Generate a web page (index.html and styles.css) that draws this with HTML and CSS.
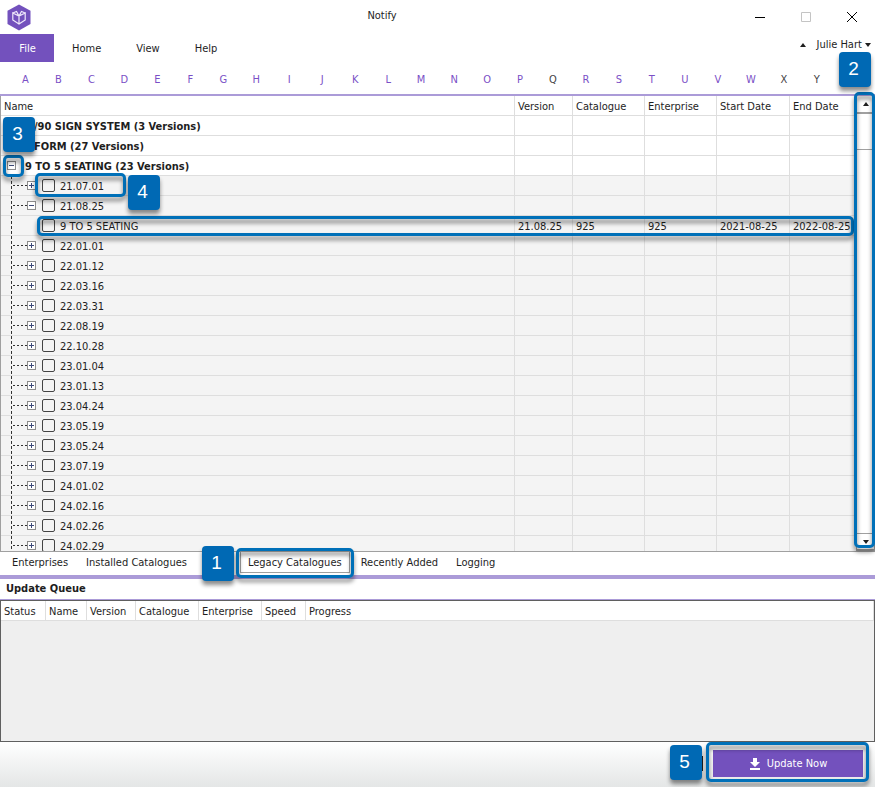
FILE: index.html
```html
<!doctype html>
<html lang="en">
  <head>
    <meta charset="utf-8">
    <meta name="viewport" content="width=device-width">
    <title>Notify</title>

    <link rel="stylesheet" href="styles.css">
  </head>
  <body>
    <header id="titlebar">
      <svg class="logo" width="24" height="27" viewBox="0 0 24 27">
        <path fill="#7351bd" d="M12 0.500 23.500 6.800V20L12 26.500 0.500 20V6.800z"/>
        <path fill="none" stroke="#efe8fb" stroke-width="1.200" d="M12 12v8M5.800 9v7L12 20l6.200-4V9L12 12zM5.800 9 9.500 7.500 12 12l2.500-4.500L18.200 9"/>
      </svg>
      <h1>Notify</h1>
      <button class="win" aria-label="Minimize"><svg width="12" height="12"><path d="M1 6.500h10" stroke="#000"/></svg></button>
      <button class="win" aria-label="Maximize"><svg width="12" height="12"><path d="M1.500 1.500h9v9h-9z" fill="none" stroke="#c4c4c4"/></svg></button>
      <button class="win" aria-label="Close"><svg width="12" height="12"><path d="M1 1l10 10M11 1 1 11" stroke="#000"/></svg></button>
    </header>

    <nav id="menu">
      <button class="file">File</button>
      <button>Home</button>
      <button>View</button>
      <button>Help</button>
      <div class="user">
        <button aria-label="Collapse"><i class="up"></i></button>
        <button>Julie Hart <i class="down"></i></button>
      </div>
    </nav>

    <nav id="letters">
      <button>A</button><button>B</button><button>C</button><button>D</button>
      <button>E</button><button>F</button><button>G</button><button>H</button>
      <button>I</button><button>J</button><button>K</button><button>L</button>
      <button>M</button><button>N</button><button>O</button><button>P</button>
      <button class="none">Q</button><button>R</button><button>S</button><button>T</button>
      <button>U</button><button>V</button><button>W</button><button class="none">X</button>
      <button class="none">Y</button><button class="none"></button>
      <span class="badge b2">2</span>
    </nav>

    <main>
      <div id="tree">
        <table>
          <colgroup>
            <col><col class="c-version"><col class="c-code"><col class="c-code"><col class="c-start"><col class="c-end">
          </colgroup>
          <thead>
            <tr><th>Name</th><th>Version</th><th>Catalogue</th><th>Enterprise</th><th>Start Date</th><th>End Date</th></tr>
          </thead>
          <tbody id="rows">
            <tr class="group"><td><div class="cell covered"><span>/90 SIGN SYSTEM (3 Versions)</span></div><span class="badge b3">3</span></td><td></td><td></td><td></td><td></td><td></td></tr>
            <tr class="group"><td><div class="cell covered"><span>FORM (27 Versions)</span></div></td><td></td><td></td><td></td><td></td><td></td></tr>
            <tr class="group"><td><div class="cell"><button class="exp" aria-label="Collapse"></button><span>9 TO 5 SEATING (23 Versions)</span></div><span class="ring r3"></span></td><td></td><td></td><td></td><td></td><td></td></tr>
          </tbody>
        </table>
      </div>
      <div id="scroll">
        <button aria-label="Scroll up"><i class="up"></i></button>
        <div class="thumb"></div>
        <button class="last" aria-label="Scroll down"><i class="down"></i></button>
      </div>
      <span class="ring r2"></span>
    </main>

    <nav id="tabs">
      <button>Enterprises</button>
      <button>Installed Catalogues</button>
      <span class="badge b1">1</span>
      <button class="active">Legacy Catalogues<span class="ring r1"></span></button>
      <button>Recently Added</button>
      <button>Logging</button>
    </nav>

    <section id="queue">
      <h2>Update Queue</h2>
      <div class="list">
        <table>
          <colgroup>
            <col class="q-status"><col class="q-name"><col class="q-version"><col class="q-code"><col class="q-code"><col class="q-speed"><col>
          </colgroup>
          <thead>
            <tr><th>Status</th><th>Name</th><th>Version</th><th>Catalogue</th><th>Enterprise</th><th>Speed</th><th>Progress</th></tr>
          </thead>
        </table>
      </div>
    </section>

    <footer>
      <span class="badge b5">5</span>
      <div class="caret"></div>
      <button id="update">
        <svg width="12" height="12" viewBox="0 0 12 12"><path fill="#fff" d="M4 0h4v4h3L6 9 1 4h3zM1 10h10v2H1z"/></svg>
        Update Now
        <span class="ring r5"></span>
      </button>
    </footer>

    <script>
      var versions = ["21.07.01", "21.08.25", "22.01.01", "22.01.12", "22.03.16",
            "22.03.31", "22.08.19", "22.10.28", "23.01.04", "23.01.13", "23.04.24",
            "23.05.19", "23.05.24", "23.07.19", "24.01.02", "24.02.16", "24.02.26", "24.02.29"],
          rows = document.getElementById("rows"),
          open = "21.08.25";

      function addRow(cls, id, name, cells, extra) {
        var tr = document.createElement("tr"),
            html = '<td><div class="cell">';

        tr.className = cls;
        if (cls === "version") {
          html += '<button class="exp' + (name === open ? "" : " plus") + '" aria-label="Expand"></button>';
        }
        html += '<input type="checkbox" id="' + id + '"><label for="' + id + '">' + name + "</label></div>" + extra + "</td>";
        for (var i = 0; i < 5; i++) {
          html += "<td>" + (cells[i] || "") + "</td>";
        }
        tr.innerHTML = html;
        rows.appendChild(tr);
      }

      for (var i = 0; i < versions.length; i++) {
        addRow("version", "v" + i, versions[i], [],
          i === 0 ? '<span class="ring r4"></span><span class="badge b4">4</span>' : "");
        if (versions[i] === open) {
          addRow("item", "item", "9 TO 5 SEATING",
            ["21.08.25", "925", "925", "2021-08-25", "2022-08-25"], '<span class="ring row"></span>');
        }
      }
    </script>
  </body>
</html>
```

FILE: styles.css
```css
* { box-sizing: border-box; }

body {
  display: flex;
  flex-direction: column;
  height: 100vh;
  margin: 0;
  overflow: hidden;
  background: #fff;
  color: #1e1e1e;
  font: 11px/14px "DejaVu Sans Condensed", "DejaVu Sans", sans-serif;
}

button {
  padding: 0;
  border: 0;
  background: none;
  color: inherit;
  font: inherit;
  cursor: pointer;
}

h1, h2 {
  margin: 0;
  font-size: 11px;
}

/* title bar */
#titlebar {
  display: flex;
  align-items: center;
  height: 34px;
  flex: none;
}

.logo { margin-left: 7px; }

#titlebar h1 {
  flex: 1;
  padding: 0 4px 2px 0;
  font-weight: normal;
  text-align: center;
}

.win {
  width: 46px;
  height: 34px;
}

.win svg { display: block; margin: 0 auto; }

/* menu */
#menu {
  display: flex;
  flex: none;
  height: 28px;
}

#menu > button { padding: 2px 17px 0 18px; }

#menu .file {
  width: 54px;
  background: #7351bd;
  color: #fff;
}

.user {
  display: flex;
  gap: 10px;
  margin-left: auto;
  padding: 0 4px 6px 0;
}

.up, .down {
  display: inline-block;
  border: 3px solid transparent;
  vertical-align: middle;
}

.up { border-top: 0; border-bottom: 4px solid #1e1e1e; }
.down { border-bottom: 0; border-top: 4px solid #1e1e1e; }

#letters {
  position: relative;
  display: flex;
  flex: none;
  height: 34px;
  padding: 0 9px;
  border-bottom: 2px solid #ab9bd8;
}

#letters button {
  flex: 1;
  padding-top: 4px;
  color: #7a4fc6;
}

#letters .none { color: #444; }

/* catalogue tree */
main {
  position: relative;
  display: flex;
  flex: 1;
  min-height: 0;
  border: 1px solid #a0a0a0;
  border-top: 0;
}

#tree {
  flex: 1;
  overflow: hidden;
}

table {
  width: 100%;
  table-layout: fixed;
  border-collapse: separate;
  border-spacing: 0;
}

th, td {
  height: 20px;
  padding: 2px 3px 0;
  border-right: 1px solid #dedede;
  border-bottom: 1px solid #dedede;
  font-weight: normal;
  text-align: left;
  white-space: nowrap;
}

#tree th:last-child, #tree td:last-child { border-right: 0; }

.c-version { width: 58px; }
.c-code { width: 72px; }
.c-start { width: 73px; }
.c-end { width: 66px; }

#rows tr { position: relative; }

.group td { font-weight: bold; }
.version td, .item td { background: #f4f4f4; }
#rows td:first-child { padding: 0; }

.cell {
  position: relative;
  display: flex;
  align-items: center;
  gap: 6px;
  height: 19px;
}

.cell span, .cell label { padding-top: 2px; }

.group .cell { gap: 9px; padding-left: 6px; }
.group .covered { padding-left: 33px; }
.version .cell { padding-left: 26px; }
.item .cell { padding-left: 41px; }

/* dashed connectors */
.version .cell::before, .item .cell::before {
  content: "";
  position: absolute;
  top: 0;
  left: 10px;
  width: 1px;
  height: 20px;
  background: repeating-linear-gradient(#333 0 3px, transparent 3px 5px);
}

.version .cell::after {
  content: "";
  position: absolute;
  top: 9px;
  left: 12px;
  width: 14px;
  height: 1px;
  background: repeating-linear-gradient(90deg, #333 0 2px, transparent 2px 4px);
}

.exp {
  width: 9px;
  height: 9px;
  border: 1px solid #8c8c8c;
  background: linear-gradient(#3c4a78, #3c4a78) center / 5px 1px no-repeat, #fff;
}

.exp.plus {
  background: linear-gradient(#3c4a78, #3c4a78) center / 5px 1px no-repeat,
    linear-gradient(#3c4a78, #3c4a78) center / 1px 5px no-repeat, #fff;
}

input {
  appearance: none;
  width: 13px;
  height: 13px;
  margin: 0;
  border: 1px solid #444;
  border-radius: 2px;
}

.cell label { margin-left: -1px; }

#scroll {
  display: flex;
  flex-direction: column;
  width: 18px;
  border-left: 1px solid #a0a0a0;
}

#scroll button {
  height: 18px;
  border-bottom: 2px solid #a0a0a0;
  line-height: 10px;
}

#scroll .last {
  margin-top: auto;
  border-top: 1px solid #a0a0a0;
}

.thumb {
  height: 36px;
  border-bottom: 1px solid #a0a0a0;
}

/* tabs */
#tabs {
  position: relative;
  display: flex;
  flex: none;
  height: 27px;
  padding-left: 5px;
  border-bottom: 4px solid #ab9bd8;
}

#tabs button {
  position: relative;
  height: 21px;
  padding: 0 7px;
  margin-right: 4px;
}

#tabs .active {
  margin-left: 42px;
  padding: 1px 7px 0;
  border: 1px solid #a0a0a0;
  border-top: 0;
}

/* update queue */
#queue h2 {
  height: 21px;
  padding: 3px 6px;
  border-bottom: 1px solid #ab9bd8;
}

.list {
  height: 142px;
  border: 1px solid #5f5f5f;
  background: #efefef;
}

.list th {
  background: #fff;
  border-bottom: 1px solid #dedede;
}

.q-status { width: 45px; }
.q-name { width: 41px; }
.q-version { width: 49px; }
.q-code { width: 63px; }
.q-speed { width: 44px; }

footer {
  position: relative;
  display: flex;
  flex: none;
  justify-content: flex-end;
  align-items: center;
  gap: 10px;
  height: 45px;
  padding: 0 12px 2px;
  background: linear-gradient(#fff, #e4e6e6);
}

.caret {
  width: 1px;
  height: 15px;
  background: #222;
}

#update {
  position: relative;
  display: flex;
  align-items: center;
  justify-content: center;
  gap: 6px;
  width: 150px;
  height: 27px;
  background: #7351bd;
  color: #fff;
}

/* numbered callouts */
.badge {
  position: absolute;
  z-index: 2;
  width: 32px;
  height: 35px;
  padding-right: 3px;
  border-radius: 4px;
  background: #0069b4;
  box-shadow: 0 4px 4px rgba(0, 0, 0, .45);
  color: #fff;
  font: 19px/34px "Liberation Sans", sans-serif;
  text-align: center;
}

.ring {
  position: absolute;
  z-index: 1;
  border: 3px solid #0070b8;
  border-radius: 5px;
  filter: drop-shadow(0 4px 2px rgba(0, 0, 0, .5));
  pointer-events: none;
}

.b1 { top: -6px; left: 202px; }
.b2 { top: -10px; right: 4px; }
.b3 { top: 1px; left: 2px; }
.b4 { top: -1px; left: 127px; }
.b5 { top: 3px; right: 173px; }

.r1 { inset: -4px -5px -6px; }
.r2 { top: -4px; right: -1px; bottom: 3px; width: 21px; }
.r3 { top: -1px; left: 2px; width: 21px; height: 22px; }
.r4 { top: -3px; left: 34px; width: 91px; height: 24px; }
.r5 { inset: -8px -6px -5px -7px; }
.ring.row { inset: 0 2px 0 36px; }
```
